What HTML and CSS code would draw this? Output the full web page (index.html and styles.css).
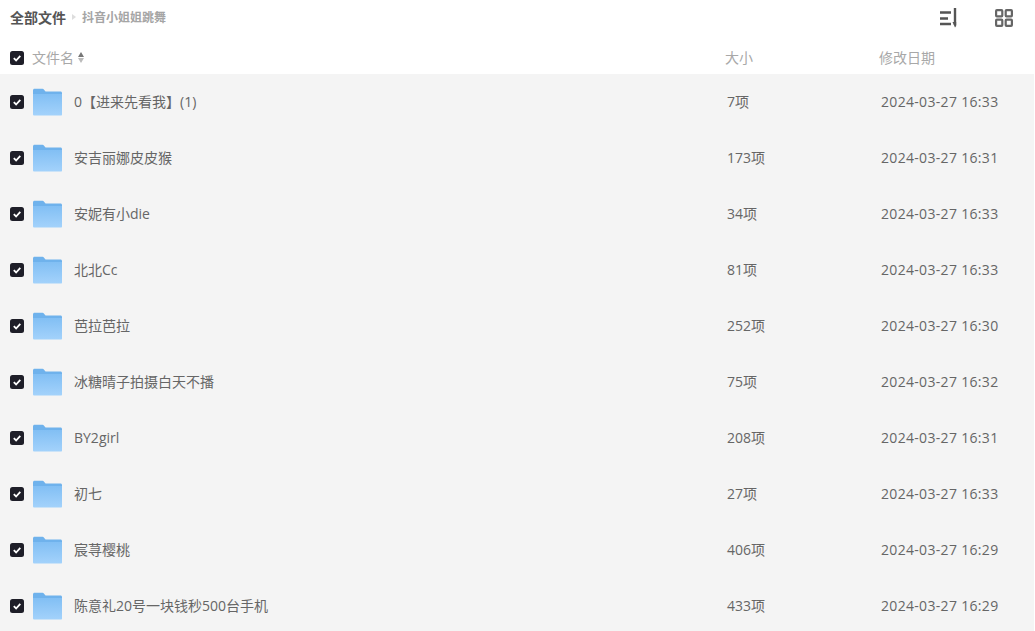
FILE: index.html
```html
<!DOCTYPE html>
<html lang="zh-CN">
<head>
    <meta charset="UTF-8">
    <title>抖音小姐姐跳舞</title>
    <link rel="stylesheet" href="styles.css">
</head>
<body>
    <svg class="defs" width="0" height="0">
        <defs>
            <linearGradient id="folderFront" x1="0" y1="0" x2="0" y2="1">
                <stop offset="0" stop-color="#82bff4"/>
                <stop offset="1" stop-color="#a3d2fb"/>
            </linearGradient>
            <symbol id="folder" viewBox="0 0 30 28">
                <path d="M0 2C0 1 .7.4 1.6.4h8.2c.7 0 1.2.3 1.6.8l1.6 1.9h15.4c1 0 1.6.7 1.6 1.6V10H0z" fill="#6fb2ec"/>
                <path d="M0 5.8h30v21.2c0 .6-.4 1-1 1H1c-.6 0-1-.4-1-1z" fill="url(#folderFront)"/>
            </symbol>
            <symbol id="check" viewBox="0 0 14 14">
                <rect width="14" height="14" rx="2.5" fill="#1e1e28"/>
                <path d="M3.8 7.2l2.3 2.3 4.2-4.7" fill="none" stroke="#fff" stroke-width="1.8"/>
            </symbol>
        </defs>
    </svg>

    <header class="topbar">
        <nav class="crumbs">
            <span class="crumb-root">全部文件</span>
            <span class="crumb-arrow"></span>
            <span class="crumb-current">抖音小姐姐跳舞</span>
        </nav>
        <div class="tools">
            <svg class="tool" width="20" height="20" viewBox="0 0 20 20">
                <path d="M1 4.5h11M1 10.5h8M1 16h11" fill="none" stroke="#555" stroke-width="2.4"/>
                <path d="M16 0v17" fill="none" stroke="#555" stroke-width="2.4"/>
                <path d="M13.5 14h3.7v4l-1.2 1.6z" fill="#555"/>
            </svg>
            <svg class="tool" width="18" height="18" viewBox="0 0 18 18">
                <g fill="none" stroke="#666" stroke-width="2.2">
                    <rect x="1.1" y="1.1" width="6.2" height="6.2" rx=".8"/>
                    <rect x="10.7" y="1.1" width="6.2" height="6.2" rx=".8"/>
                    <rect x="1.1" y="10.7" width="6.2" height="6.2" rx=".8"/>
                    <rect x="10.7" y="10.7" width="6.2" height="6.2" rx=".8"/>
                </g>
            </svg>
        </div>
    </header>

    <div class="table-head">
        <svg class="checkbox"><use href="#check"/></svg>
        <div class="col-name head-name">
            文件名
            <span class="sort"><i class="sort-up"></i><i class="sort-down"></i></span>
        </div>
        <div class="col-size">大小</div>
        <div class="col-date">修改日期</div>
    </div>

    <ul class="file-list">
        <li class="file-row">
            <svg class="checkbox"><use href="#check"/></svg>
            <svg class="folder"><use href="#folder"/></svg>
            <div class="col-name">0【进来先看我】(1)</div>
            <div class="col-size">7项</div>
            <div class="col-date">2024-03-27 16:33</div>
        </li>
        <li class="file-row">
            <svg class="checkbox"><use href="#check"/></svg>
            <svg class="folder"><use href="#folder"/></svg>
            <div class="col-name">安吉丽娜皮皮猴</div>
            <div class="col-size">173项</div>
            <div class="col-date">2024-03-27 16:31</div>
        </li>
        <li class="file-row">
            <svg class="checkbox"><use href="#check"/></svg>
            <svg class="folder"><use href="#folder"/></svg>
            <div class="col-name">安妮有小die</div>
            <div class="col-size">34项</div>
            <div class="col-date">2024-03-27 16:33</div>
        </li>
        <li class="file-row">
            <svg class="checkbox"><use href="#check"/></svg>
            <svg class="folder"><use href="#folder"/></svg>
            <div class="col-name">北北Cc</div>
            <div class="col-size">81项</div>
            <div class="col-date">2024-03-27 16:33</div>
        </li>
        <li class="file-row">
            <svg class="checkbox"><use href="#check"/></svg>
            <svg class="folder"><use href="#folder"/></svg>
            <div class="col-name">芭拉芭拉</div>
            <div class="col-size">252项</div>
            <div class="col-date">2024-03-27 16:30</div>
        </li>
        <li class="file-row">
            <svg class="checkbox"><use href="#check"/></svg>
            <svg class="folder"><use href="#folder"/></svg>
            <div class="col-name">冰糖晴子拍摄白天不播</div>
            <div class="col-size">75项</div>
            <div class="col-date">2024-03-27 16:32</div>
        </li>
        <li class="file-row">
            <svg class="checkbox"><use href="#check"/></svg>
            <svg class="folder"><use href="#folder"/></svg>
            <div class="col-name">BY2girl</div>
            <div class="col-size">208项</div>
            <div class="col-date">2024-03-27 16:31</div>
        </li>
        <li class="file-row">
            <svg class="checkbox"><use href="#check"/></svg>
            <svg class="folder"><use href="#folder"/></svg>
            <div class="col-name">初七</div>
            <div class="col-size">27项</div>
            <div class="col-date">2024-03-27 16:33</div>
        </li>
        <li class="file-row">
            <svg class="checkbox"><use href="#check"/></svg>
            <svg class="folder"><use href="#folder"/></svg>
            <div class="col-name">宸荨樱桃</div>
            <div class="col-size">406项</div>
            <div class="col-date">2024-03-27 16:29</div>
        </li>
        <li class="file-row">
            <svg class="checkbox"><use href="#check"/></svg>
            <svg class="folder"><use href="#folder"/></svg>
            <div class="col-name">陈意礼20号一块钱秒500台手机</div>
            <div class="col-size">433项</div>
            <div class="col-date">2024-03-27 16:29</div>
        </li>
    </ul>
</body>
</html>
```

FILE: styles.css
```css
html, body {
    height: 631px;
    overflow: hidden;
}
body {
    font-family: "Open Sans", "Noto Sans CJK SC", sans-serif;
    font-size: 14px;
    margin: 0;
    padding: 0;
    background-color: #fff;
    color: #666;
}
.defs {
    display: block;
    height: 0;
}
.topbar {
    display: flex;
    align-items: center;
    justify-content: space-between;
    height: 36px;
    padding: 0 22px 0 10px;
}
.crumbs {
    display: flex;
    align-items: center;
    padding-bottom: 2px;
    font-size: 14px;
    font-weight: 700;
}
.crumb-root {
    color: #555;
    font-size: 14px;
}
.crumb-arrow {
    width: 0;
    height: 0;
    margin: 0 6px;
    border-left: 4px solid #ddd;
    border-top: 3px solid transparent;
    border-bottom: 3px solid transparent;
}
.crumb-current {
    color: #a5a5a5;
    font-size: 12px;
}
.tools {
    display: flex;
    align-items: center;
    gap: 36px;
}
.tool {
    display: block;
}
.table-head, .file-row {
    display: flex;
    align-items: center;
    padding-left: 10px;
}
.table-head {
    box-sizing: border-box;
    height: 38px;
    padding-top: 6px;
    color: #a8a8a8;
    font-size: 14px;
}
.table-head .col-name, .table-head .col-size, .table-head .col-date {
    padding-bottom: 2px;
}
.checkbox {
    flex: none;
    width: 14px;
    height: 14px;
}
.head-name {
    display: flex;
    align-items: center;
    margin-left: 8px;
    width: 693px;
}
.sort {
    display: flex;
    flex-direction: column;
    gap: 1px;
    margin-left: 4px;
}
.sort-up, .sort-down {
    width: 0;
    height: 0;
    border-left: 3.5px solid transparent;
    border-right: 3.5px solid transparent;
}
.sort-up {
    border-bottom: 5px solid #777;
}
.sort-down {
    border-top: 5px solid #bbb;
}
.col-size {
    width: 154px;
}
.file-list {
    list-style: none;
    margin: 0 1px 0 0;
    padding: 0;
    background-color: #f4f4f4;
}
.file-row {
    height: 56px;
}
.folder {
    flex: none;
    width: 29px;
    height: 28px;
    margin-left: 9px;
    margin-right: 1px;
}
.file-row .col-name {
    width: 653px;
    margin-left: 11px;
    padding-bottom: 2px;
}
.file-row .col-size {
    width: 154px;
    padding-bottom: 2px;
}
.file-row .col-date {
    padding-bottom: 2px;
    letter-spacing: .32px;
}
```
